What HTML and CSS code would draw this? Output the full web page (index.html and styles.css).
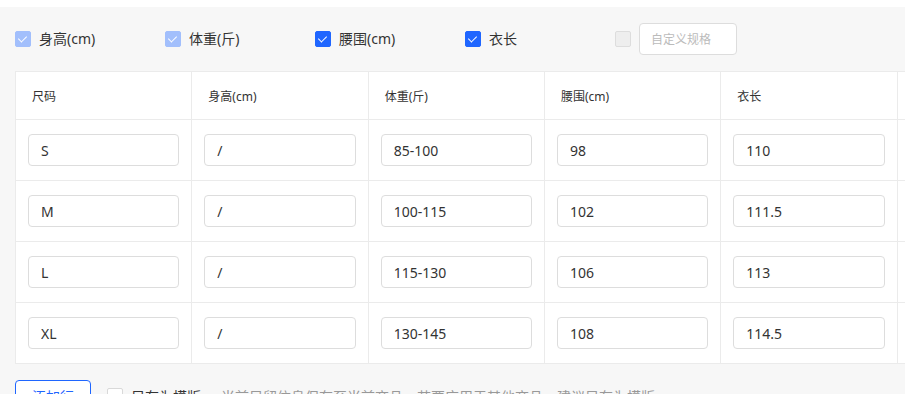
FILE: index.html
```html
<!DOCTYPE html>
<html lang="zh">

<head>
    <meta charset="UTF-8">
    <meta name="viewport" content="width=device-width, initial-scale=1.0">
    <link rel="stylesheet" href="styles.css">
    <title>尺码表</title>
</head>

<body>
    <div class="panel">
        <div class="spec-options">
            <label class="option"><span class="box checked disabled"></span>身高(cm)</label>
            <label class="option"><span class="box checked disabled"></span>体重(斤)</label>
            <label class="option"><span class="box checked"></span>腰围(cm)</label>
            <label class="option"><span class="box checked"></span>衣长</label>
            <div class="option">
                <span class="box off"></span>
                <input class="custom-input" type="text" placeholder="自定义规格">
            </div>
        </div>

        <div class="table-wrap">
            <table class="size-table">
                <thead>
                    <tr>
                        <th>尺码</th>
                        <th>身高(cm)</th>
                        <th>体重(斤)</th>
                        <th>腰围(cm)</th>
                        <th>衣长</th>
                        <th></th>
                    </tr>
                </thead>
                <tbody>
                    <tr>
                        <td><input class="cell-input" value="S"></td>
                        <td><input class="cell-input" value="/"></td>
                        <td><input class="cell-input" value="85-100"></td>
                        <td><input class="cell-input" value="98"></td>
                        <td><input class="cell-input" value="110"></td>
                        <td></td>
                    </tr>
                    <tr>
                        <td><input class="cell-input" value="M"></td>
                        <td><input class="cell-input" value="/"></td>
                        <td><input class="cell-input" value="100-115"></td>
                        <td><input class="cell-input" value="102"></td>
                        <td><input class="cell-input" value="111.5"></td>
                        <td></td>
                    </tr>
                    <tr>
                        <td><input class="cell-input" value="L"></td>
                        <td><input class="cell-input" value="/"></td>
                        <td><input class="cell-input" value="115-130"></td>
                        <td><input class="cell-input" value="106"></td>
                        <td><input class="cell-input" value="113"></td>
                        <td></td>
                    </tr>
                    <tr>
                        <td><input class="cell-input" value="XL"></td>
                        <td><input class="cell-input" value="/"></td>
                        <td><input class="cell-input" value="130-145"></td>
                        <td><input class="cell-input" value="108"></td>
                        <td><input class="cell-input" value="114.5"></td>
                        <td></td>
                    </tr>
                </tbody>
            </table>
        </div>

        <div class="actions">
            <button class="add-btn">添加行</button>
            <label class="save-tpl">
                <span class="box"></span>
                <span class="save-label">只存为模版</span>
                <span class="hint">当前只留信息保存至当前商品，若要应用于其他商品，建议另存为模版</span>
            </label>
        </div>
    </div>
</body>

</html>
```

FILE: styles.css
```css
body {
    margin: 0;
    padding-top: 7px;
    background: #fff;
    color: #333;
    font-family: "Noto Sans", "Noto Sans CJK SC", sans-serif;
    font-size: 14px;
    overflow: hidden;
}

.panel {
    background: #f7f7f7;
    padding: 16px 0 0 15px;
    height: 400px;
    overflow: hidden;
}

.spec-options {
    display: flex;
    align-items: center;
    height: 32px;
}

.option {
    width: 150px;
    display: flex;
    align-items: center;
    gap: 8px;
    line-height: 20px;
}

.box {
    width: 16px;
    height: 16px;
    box-sizing: border-box;
    border-radius: 2px;
    border: 1px solid #d9d9d9;
    background: #fff;
    position: relative;
    flex-shrink: 0;
}

.box.checked {
    background: #1f66ff;
    border-color: #1f66ff;
}

.box.checked.disabled {
    background: #a2bffc;
    border-color: #a2bffc;
}

.box.checked::after {
    content: "";
    position: absolute;
    left: 4px;
    top: 2px;
    width: 4px;
    height: 7px;
    border: solid #fff;
    border-width: 0 1.5px 1.5px 0;
    transform: rotate(45deg);
}

.box.off {
    background: #eee;
    border-color: #ddd;
}

.custom-input {
    width: 98px;
    height: 32px;
    box-sizing: border-box;
    border: 1px solid #ddd;
    border-radius: 4px;
    padding: 0 11px;
    font-family: inherit;
    font-size: 12px;
    background: #fff;
    outline: none;
}

.custom-input::placeholder {
    color: #bbb;
}

.table-wrap {
    margin-top: 16px;
    width: 1060px;
}

.size-table {
    width: 1059px;
    table-layout: fixed;
    border-collapse: collapse;
    background: #fff;
}

.size-table th,
.size-table td {
    border: 1px solid #ebebeb;
    padding: 0;
}

.size-table th {
    height: 47px;
    text-align: left;
    font-weight: normal;
    font-size: 12px;
    padding-left: 16px;
    color: #333;
}

.size-table td {
    height: 60px;
    padding: 0 12px 0 12px;
}

.cell-input {
    width: 100%;
    height: 32px;
    box-sizing: border-box;
    border: 1px solid #ddd;
    border-radius: 4px;
    padding: 0 12px;
    font-family: inherit;
    font-size: 14px;
    color: #333;
    background: #fff;
    outline: none;
    display: block;
}

.actions {
    margin-top: 16px;
    display: flex;
    align-items: center;
    gap: 16px;
}

.add-btn {
    width: 76px;
    height: 32px;
    border: 1px solid #1f66ff;
    border-radius: 4px;
    background: #fff;
    color: #1f66ff;
    font-family: inherit;
    font-size: 14px;
}

.save-tpl {
    display: flex;
    align-items: center;
    gap: 8px;
}

.hint {
    color: #999;
    margin-left: 12px;
}
```
